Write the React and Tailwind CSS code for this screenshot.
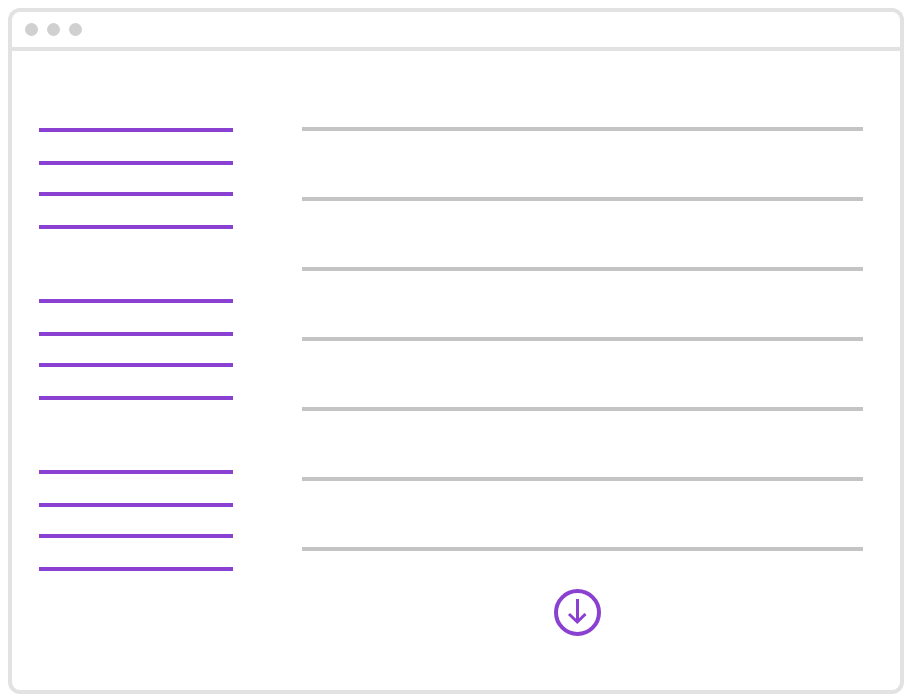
const groups = [0, 1, 2];
const rows = [0, 1, 2, 3, 4, 5, 6];

function MenuGroup() {
  return (
    <div className="flex flex-col">
      <div className="h-1 bg-[#8a40d0]" />
      <div className="mt-[29px] h-1 bg-[#8a40d0]" />
      <div className="mt-[27px] h-1 bg-[#8a40d0]" />
      <div className="mt-[29px] h-1 bg-[#8a40d0]" />
    </div>
  );
}

export default function App() {
  return (
    <div className="h-[700px] w-[914px] bg-white pb-[6px] pl-2 pr-[10px] pt-2">
      <div className="h-full rounded-xl border-4 border-[#e2e2e2]">
        <div className="flex h-[39px] items-center gap-[9px] border-b-4 border-[#e2e2e2] pl-[13px]">
          <span className="h-[13px] w-[13px] rounded-full bg-[#d0d0d0]" />
          <span className="h-[13px] w-[13px] rounded-full bg-[#d0d0d0]" />
          <span className="h-[13px] w-[13px] rounded-full bg-[#d0d0d0]" />
        </div>
        <div className="flex pl-[27px]">
          <div className="flex w-[194px] flex-col gap-[70px] pt-[77px]">
            {groups.map((g) => (
              <MenuGroup key={g} />
            ))}
          </div>
          <div className="ml-[69px] flex w-[561px] flex-col pt-[76px]">
            <div className="flex flex-col gap-[66px]">
              {rows.map((r) => (
                <div key={r} className="h-1 bg-[#c4c4c4]" />
              ))}
            </div>
            <div className="mt-[38px] flex justify-center pr-[10px]">
              <svg width="47" height="47" viewBox="0 0 47 47" fill="none" stroke="#8a40d0" strokeWidth="4">
                <circle cx="23.5" cy="23.5" r="21.5" />
                <path d="M23.5 10V33" strokeWidth="3" />
                <path d="M15 25L23.3 33L31.5 25" strokeWidth="3" />
              </svg>
            </div>
          </div>
        </div>
      </div>
    </div>
  );
}
